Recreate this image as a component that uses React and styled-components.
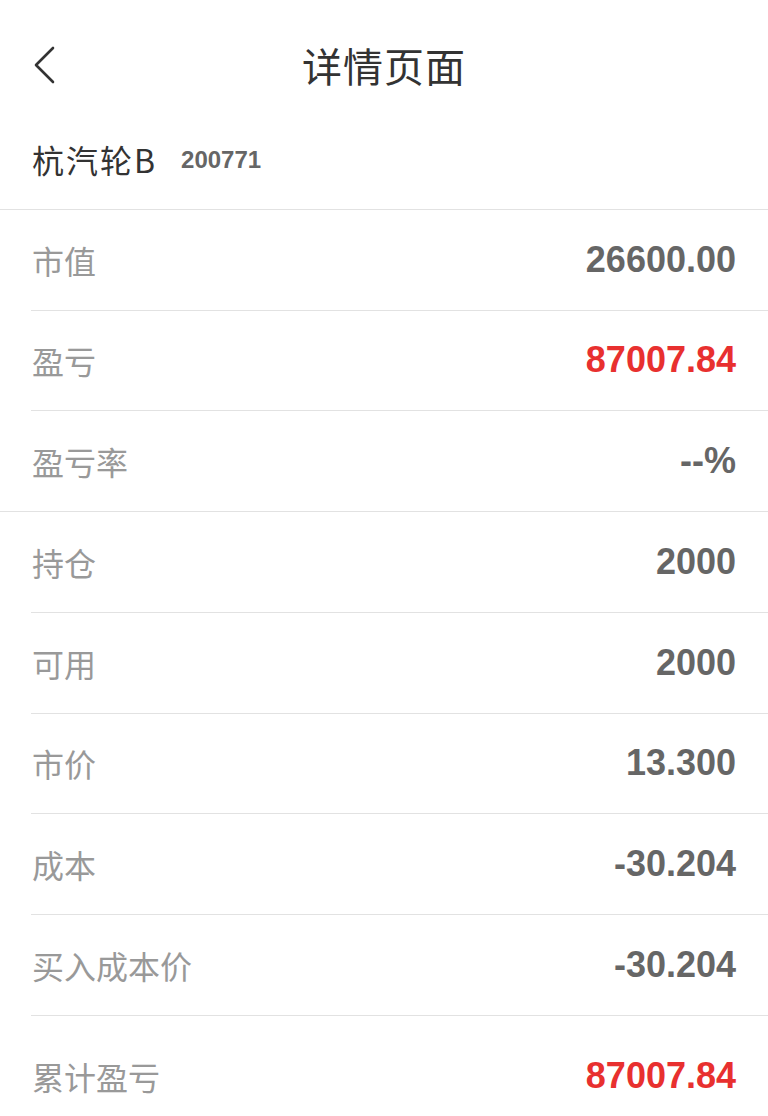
import React from 'react';
import styled, { createGlobalStyle } from 'styled-components';

const GlobalStyle = createGlobalStyle`
  html, body {
    margin: 0;
    padding: 0;
    background: #fff;
  }
  body {
    font-family: "Noto Sans CJK SC", "Noto Sans", sans-serif;
  }
`;

const Page = styled.div`
  width: 768px;
  min-height: 1116px;
  background: #fff;
  overflow: hidden;
`;

const Header = styled.header`
  position: relative;
  height: 90px;
  padding-top: 20px;
  display: flex;
  align-items: center;
  justify-content: center;
`;

const BackButton = styled.button`
  position: absolute;
  left: 28px;
  top: 44px;
  width: 32px;
  height: 42px;
  padding: 0;
  border: 0;
  background: none;
  display: flex;
  align-items: center;
  justify-content: center;
`;

const Title = styled.h1`
  margin: 0;
  font-size: 40px;
  font-weight: 400;
  color: #333;
  letter-spacing: 1px;
`;

const StockInfo = styled.div`
  height: 98.75px;
  padding: 0 32px;
  display: flex;
  align-items: center;
  gap: 24px;
  border-bottom: 1px solid #e2e2e2;
`;

const StockName = styled.span`
  font-size: 32px;
  color: #333;
  letter-spacing: 2px;
`;

const StockCode = styled.span`
  font-family: "Liberation Sans", Arial, sans-serif;
  font-size: 24px;
  font-weight: 700;
  color: #666;
  margin-top: 2px;
`;

const Section = styled.section`
  border-bottom: ${(p) => (p.$last ? 'none' : '1px solid #e2e2e2')};
  padding-left: 31px;
`;

const Row = styled.div`
  height: ${(p) => (p.$tall ? '120px' : '99.75px')};
  padding-right: 32px;
  display: flex;
  align-items: center;
  justify-content: space-between;
  & + & {
    border-top: 1px solid #e2e2e2;
  }
`;

const Label = styled.span`
  font-size: 32px;
  color: #999;
  padding-left: 1px;
`;

const Value = styled.span`
  font-family: "Liberation Sans", Arial, sans-serif;
  font-size: 36px;
  font-weight: 700;
  color: ${(p) => (p.$red ? '#e8302f' : '#666')};
`;

const sections = [
  [
    { label: '市值', value: '26600.00' },
    { label: '盈亏', value: '87007.84', red: true },
    { label: '盈亏率', value: '--%' },
  ],
  [
    { label: '持仓', value: '2000' },
    { label: '可用', value: '2000' },
    { label: '市价', value: '13.300' },
    { label: '成本', value: '-30.204' },
    { label: '买入成本价', value: '-30.204' },
    { label: '累计盈亏', value: '87007.84', red: true, tall: true },
  ],
];

export default function App() {
  return (
    <Page>
      <GlobalStyle />
      <Header>
        <BackButton aria-label="返回">
          <svg width="24" height="38" viewBox="0 0 24 38" fill="none">
            <path d="M21 2 L4 19 L21 36" stroke="#333" strokeWidth="2.6" strokeLinecap="round" strokeLinejoin="round" />
          </svg>
        </BackButton>
        <Title>详情页面</Title>
      </Header>

      <StockInfo>
        <StockName>杭汽轮B</StockName>
        <StockCode>200771</StockCode>
      </StockInfo>

      {sections.map((rows, i) => (
        <Section key={i} $last={i === sections.length - 1}>
          {rows.map((r) => (
            <Row key={r.label} $tall={r.tall}>
              <Label>{r.label}</Label>
              <Value $red={r.red}>{r.value}</Value>
            </Row>
          ))}
        </Section>
      ))}
    </Page>
  );
}
